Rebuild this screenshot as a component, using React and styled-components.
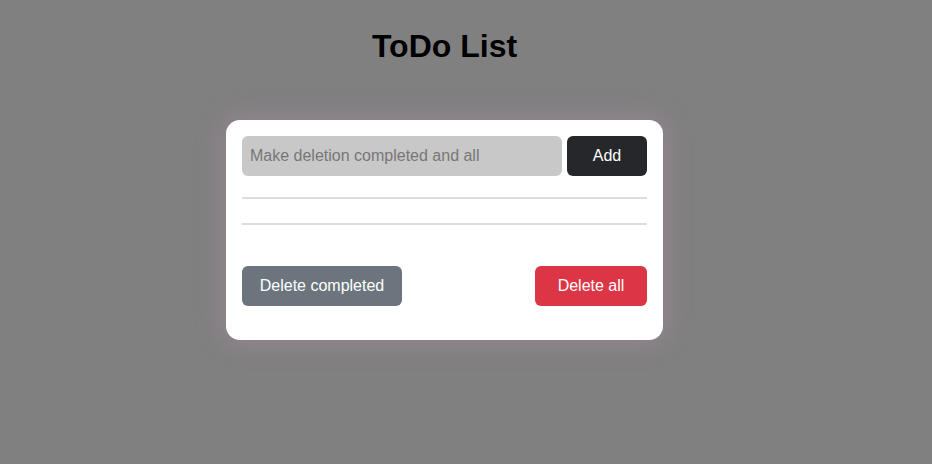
import styled, { createGlobalStyle } from 'styled-components';
import { useState } from 'react';

const Global = createGlobalStyle`
  html, body {
    margin: 0;
    padding: 0;
    background: #808080;
    font-family: "Liberation Sans", Arial, sans-serif;
  }
`;

const App = () => {
  const [text, setText] = useState('');

  return (<S.Page>
      <Global />
      <S.Title>ToDo List</S.Title>
      <S.Card>
        <S.Form onSubmit={e => e.preventDefault()}>
          <S.Input
            value={text}
            placeholder='Make deletion completed and all'
            onChange={e => setText(e.target.value)} />
          <S.Button $bg='#25272a'>Add</S.Button>
        </S.Form>
        <S.List />
        <S.Actions>
          <S.Button $bg='#6c757d' $w='160px'>Delete completed</S.Button>
          <S.Button $bg='#dc3545' $w='112px'>Delete all</S.Button>
        </S.Actions>
      </S.Card>
    </S.Page>)
};

export default App;

const S = {
  Page: styled.div`
    width: 889px;
    min-height: 464px;
    display: flex;
    flex-direction: column;
    align-items: center;
  `,
  Title: styled.h1`
    margin: 28px 0 0;
    font-size: 32px;
    line-height: 37px;
    font-weight: bold;
    color: #000;
  `,
  Card: styled.div`
    margin-top: 55px;
    width: 437px;
    box-sizing: border-box;
    padding: 16px 16px 34px;
    background: #fff;
    border-radius: 14px;
    box-shadow: 0 0 24px 4px rgba(170, 140, 160, 0.45);
  `,
  Form: styled.form`
    display: flex;
    gap: 5px;
  `,
  Input: styled.input`
    flex: 1;
    height: 40px;
    box-sizing: border-box;
    padding: 0 8px;
    border: none;
    border-radius: 6px;
    background: #c8c8c8;
    font-family: inherit;
    font-size: 16px;
    color: #333;
    outline: none;
    &::placeholder {
      color: #777;
    }
  `,
  Button: styled.button`
    width: ${p => p.$w || '80px'};
    height: 40px;
    border: none;
    border-radius: 6px;
    background: ${p => p.$bg};
    color: #fff;
    font-family: inherit;
    font-size: 16px;
    cursor: pointer;
  `,
  List: styled.ul`
    list-style: none;
    margin: 21px 0 0;
    padding: 0;
    height: 24px;
    border-top: 2px solid #ddd;
    border-bottom: 2px solid #ddd;
  `,
  Actions: styled.div`
    margin-top: 41px;
    display: flex;
    justify-content: space-between;
  `
}
